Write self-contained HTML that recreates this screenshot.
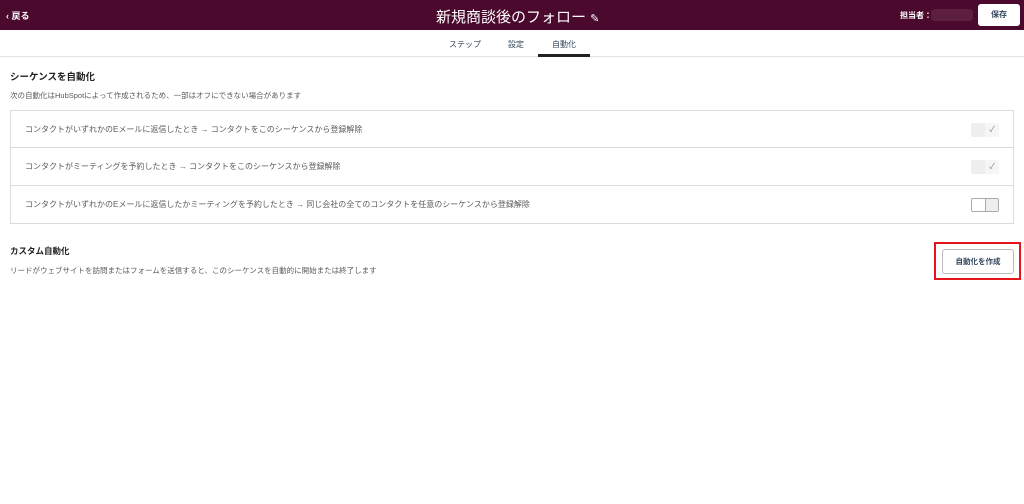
<!DOCTYPE html>
<html><head><meta charset="utf-8"><style>
*{margin:0;padding:0;box-sizing:border-box}
body{width:1024px;height:504px;background:#fff;font-family:"Liberation Sans","Noto Sans CJK JP",sans-serif;color:#33475b;position:relative;overflow:hidden}
.hdr{position:absolute;left:0;top:0;width:1024px;height:30px;background:#4b0a2d;color:#fff}
.abs{position:absolute}
.tabs{position:absolute;top:30px;left:0;width:1024px;height:27px;border-bottom:1px solid #e3e3e3}
.row{position:absolute;left:10px;width:1004px;height:38px;border:1px solid #dcdcdc;font-size:8px;color:#5a5a5a;padding-left:14px;line-height:37px}
.tg{position:absolute;right:14px;top:12px;width:28px;height:14px;border-radius:2px;background:#eee}
.ck{position:absolute;right:0;top:0;width:14px;height:14px;background:#f6f6f6;font-size:8px;color:#888;line-height:14px;text-align:center}
</style></head><body>
<div class="hdr">
<div class="abs" style="left:6px;top:9px;font-size:9px;font-weight:bold">‹ 戻る</div>
<div class="abs" style="left:436px;top:6px;font-size:15px">新規商談後のフォロー <span style="font-size:11px">✎</span></div>
<div class="abs" style="left:900px;top:10px;font-size:8px;font-weight:bold">担当者：</div>
<div class="abs" style="left:931px;top:9px;width:42px;height:12px;background:#5d1f40;border-radius:4px"></div>
<div class="abs" style="left:978px;top:4px;width:42px;height:22px;background:#fff;border-radius:3px;color:#33475b;font-size:8px;font-weight:bold;text-align:center;line-height:22px">保存</div>
</div>
<div class="tabs">
<div class="abs" style="left:449px;top:9px;font-size:8px">ステップ</div>
<div class="abs" style="left:508px;top:9px;font-size:8px">設定</div>
<div class="abs" style="left:552px;top:9px;font-size:8px">自動化</div>
<div class="abs" style="left:538px;top:24px;width:52px;height:3px;background:#222"></div>
</div>
<div class="abs" style="left:10px;top:69px;font-size:9.5px;font-weight:bold;color:#222">シーケンスを自動化</div>
<div class="abs" style="left:10px;top:90px;font-size:7.5px;color:#5a5a5a">次の自動化はHubSpotによって作成されるため、一部はオフにできない場合があります</div>
<div class="row" style="top:110px">コンタクトがいずれかのEメールに返信したとき → コンタクトをこのシーケンスから登録解除<div class="tg"><div class="ck">✓</div></div></div>
<div class="row" style="top:148px;border-top:none">コンタクトがミーティングを予約したとき → コンタクトをこのシーケンスから登録解除<div class="tg"><div class="ck">✓</div></div></div>
<div class="row" style="top:186px;border-top:none">コンタクトがいずれかのEメールに返信したかミーティングを予約したとき → 同じ会社の全てのコンタクトを任意のシーケンスから登録解除<div class="tg" style="background:#fff;border:1px solid #aaa"><div style="position:absolute;right:0;top:0;width:13px;height:12px;background:#eee;border-left:1px solid #aaa"></div></div></div>
<div class="abs" style="left:10px;top:245px;font-size:8.5px;font-weight:bold;color:#222">カスタム自動化</div>
<div class="abs" style="left:10px;top:265px;font-size:7.5px;color:#5a5a5a">リードがウェブサイトを訪問またはフォームを送信すると、このシーケンスを自動的に開始または終了します</div>
<div class="abs" style="left:934px;top:242px;width:87px;height:38px;border:2px solid #e8141c"></div>
<div class="abs" style="left:942px;top:249px;width:72px;height:25px;border:1px solid #bbb;border-radius:3px;font-size:7.5px;font-weight:bold;text-align:center;line-height:23px;color:#33475b">自動化を作成</div>
</body></html>
